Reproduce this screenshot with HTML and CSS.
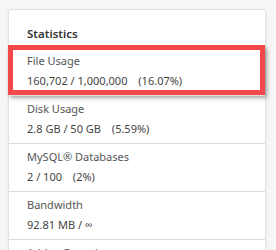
FILE: index.html
```html
<!DOCTYPE html>
<html lang="en">
<head>
    <meta charset="UTF-8">
    <meta name="viewport" content="width=device-width, initial-scale=1.0">
    <title>Statistics</title>
    <link rel="stylesheet" href="styles.css">
</head>
<body>
    <div class="card">
        <div class="card-title">Statistics</div>

        <!-- highlighted row -->
        <div class="stat-row highlight">
            <div class="stat-label">File Usage</div>
            <div class="stat-value">160,702 / 1,000,000 <span class="pct">(16.07%)</span></div>
        </div>

        <div class="stat-row">
            <div class="stat-label">Disk Usage</div>
            <div class="stat-value">2.8 GB / 50 GB <span class="pct">(5.59%)</span></div>
        </div>

        <div class="stat-row">
            <div class="stat-label">MySQL® Databases</div>
            <div class="stat-value">2 / 100 <span class="pct">(2%)</span></div>
        </div>

        <div class="stat-row">
            <div class="stat-label">Bandwidth</div>
            <div class="stat-value">92.81 MB / ∞</div>
        </div>

        <div class="stat-row">
            <div class="stat-label">Addon Domains</div>
            <div class="stat-value">0 / ∞</div>
        </div>
    </div>
</body>
</html>
```

FILE: styles.css
```css
body {
    margin: 0;
    padding: 9px 10px 0 8px;
    background-color: #f6f6f6;
    font-family: "Noto Sans", "Open Sans", sans-serif;
    font-size: 11px;
    color: #444;
}
.card {
    background: #fff;
    border: 1px solid #e2e2e2;
    border-radius: 3px;
    box-shadow: 0 1px 3px rgba(0, 0, 0, 0.08);
}
.card-title {
    padding: 14px 18px 4px;
    line-height: 19px;
    font-size: 11.5px;
    font-weight: 600;
    color: #333;
}
.stat-row {
    position: relative;
    padding: 3px 18px 4px;
    border-top: 1px solid #ddd;
    line-height: 20px;
}
.stat-label {
    color: #555;
}
.stat-value {
    color: #444;
}
.pct {
    margin-left: 8px;
}
/* Red annotation box drawn over the first row */
.highlight::after {
    content: "";
    position: absolute;
    left: -1px;
    top: -3px;
    right: 0;
    bottom: 0;
    border: 5px solid #f4484b;
    box-shadow: 2px 3px 4px rgba(0, 0, 0, 0.35);
}
```
